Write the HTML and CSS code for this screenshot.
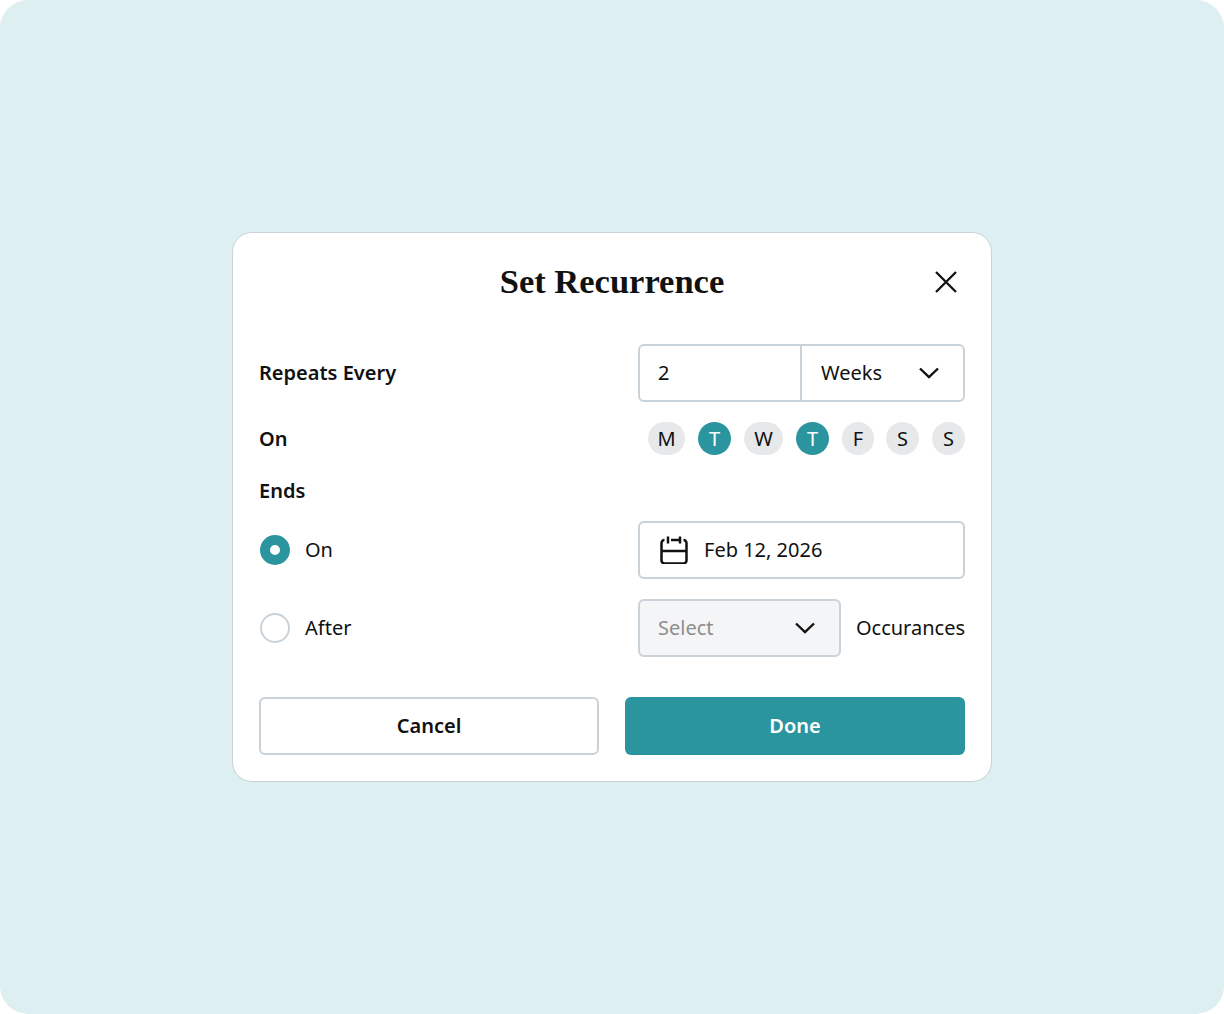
FILE: index.html
```html
<!DOCTYPE html>
<html lang="en">
<head>
  <meta charset="UTF-8">
  <meta name="viewport" content="width=device-width, initial-scale=1.0">
  <title>Set Recurrence</title>
  <link rel="stylesheet" href="styles.css">
</head>
<body>
  <div class="frame">
    <div class="dialog">
      <div class="dialog-head">
        <h1 class="dialog-title">Set Recurrence</h1>
        <svg class="close-icon" width="24" height="24" viewBox="0 0 24 24" fill="none" stroke="#111" stroke-width="2.3">
          <path d="M2 2 22 22M22 2 2 22"/>
        </svg>
      </div>

      <div class="row row-repeat">
        <div class="label">Repeats Every</div>
        <div class="field field-split">
          <div class="split-num">2</div>
          <div class="split-unit">
            <span>Weeks</span>
            <svg class="chevron" width="20" height="12" viewBox="0 0 20 12" fill="none" stroke="#111" stroke-width="2.4">
              <path d="M1 1.5 10 10.2 19 1.5"/>
            </svg>
          </div>
        </div>
      </div>

      <div class="row row-days">
        <div class="label">On</div>
        <div class="days">
          <span class="day day-m">M</span>
          <span class="day day-on">T</span>
          <span class="day day-w">W</span>
          <span class="day day-on">T</span>
          <span class="day day-f">F</span>
          <span class="day">S</span>
          <span class="day">S</span>
        </div>
      </div>

      <div class="label label-ends">Ends</div>

      <div class="row row-date">
        <label class="radio-line"><span class="radio radio-on"></span>On</label>
        <div class="field field-date">
          <svg class="cal-icon" width="28" height="28" viewBox="0 0 28 28" fill="none" stroke="#111" stroke-width="2.5">
            <path d="M4.5 4A3 3 0 0 0 1.5 7V24.5A3 3 0 0 0 4.5 27.5H23.5A3 3 0 0 0 26.5 24.5V7A3 3 0 0 0 23.5 4M11 4H19M1.5 15H26.5M8 0.5V7.5M20 0.5V7.5"/>
          </svg>
          <span>Feb 12, 2026</span>
        </div>
      </div>

      <div class="row row-after">
        <label class="radio-line"><span class="radio"></span>After</label>
        <div class="after-right">
          <div class="field field-select">
            <span>Select</span>
            <svg class="chevron" width="20" height="12" viewBox="0 0 20 12" fill="none" stroke="#111" stroke-width="2.4">
              <path d="M1 1.5 10 10.2 19 1.5"/>
            </svg>
          </div>
          <span>Occurances</span>
        </div>
      </div>

      <div class="actions">
        <button class="btn btn-cancel">Cancel</button>
        <button class="btn btn-done">Done</button>
      </div>
    </div>
  </div>
</body>
</html>
```

FILE: styles.css
```css
* {
  padding: 0;
  margin: 0;
  box-sizing: border-box;
}
body {
  background-color: #fff;
  font-family: "Noto Sans", sans-serif;
  font-size: 20px;
  line-height: 28px;
  color: #111;
}
.frame {
  width: 1224px;
  height: 1014px;
  display: flex;
  align-items: center;
  justify-content: center;
  background-color: #ddeff1;
  border-radius: 28px;
}
.dialog {
  width: 760px;
  height: 550px;
  padding: 0 26px;
  background-color: #fff;
  border: 1px solid #c9d2d8;
  border-radius: 20px;
  display: flex;
  flex-direction: column;
}
.dialog-head {
  height: 111px;
  padding-bottom: 16px;
  display: flex;
  align-items: center;
  justify-content: center;
  position: relative;
}
.dialog-title {
  font-family: "Liberation Serif", serif;
  font-size: 34.5px;
  line-height: 40px;
  font-weight: 700;
}
.close-icon {
  position: absolute;
  right: 7px;
  top: 37px;
}
.row {
  display: flex;
  align-items: center;
  justify-content: space-between;
}
.label {
  font-weight: 600;
}
.row-days {
  margin-top: 20px;
}
.label-ends {
  margin-top: 22px;
}
.row-date {
  margin-top: 16px;
}
.row-after {
  margin-top: 20px;
}
.field {
  height: 58px;
  border: 2px solid #c9d2d8;
  border-radius: 6px;
  display: flex;
  align-items: center;
}
.field-split {
  width: 327px;
}
.split-num {
  width: 162px;
  height: 100%;
  padding-left: 18px;
  line-height: 54px;
  border-right: 2px solid #c9d2d8;
}
.split-unit {
  flex: 1;
  padding: 0 24px 0 19px;
  display: flex;
  align-items: center;
  justify-content: space-between;
}
.days {
  display: flex;
  gap: 13px;
}
.day {
  width: 33px;
  height: 33px;
  border-radius: 17px;
  background-color: #e7e8ea;
  display: flex;
  align-items: center;
  justify-content: center;
}
.day-m {
  width: 37px;
}
.day-w {
  width: 39px;
}
.day-f {
  width: 32px;
  margin-right: -1px;
}
.day-on {
  background-color: #2b959f;
  color: #fff;
}
.radio-line {
  display: flex;
  align-items: center;
  gap: 15px;
}
.radio {
  width: 30px;
  height: 30px;
  margin-left: 1px;
  border: 2px solid #c9d2d8;
  border-radius: 50%;
}
.radio-on {
  border: 10px solid #2b959f;
  background-color: #fff;
}
.field-date {
  width: 327px;
  padding-left: 20px;
  gap: 16px;
}
.after-right {
  width: 327px;
  display: flex;
  align-items: center;
  justify-content: space-between;
}
.field-select {
  width: 203px;
  padding: 0 24px 0 18px;
  justify-content: space-between;
  background-color: #f4f5f7;
  color: #8d8d8d;
}
.actions {
  margin-top: 40px;
  display: grid;
  grid-template-columns: 1fr 1fr;
  gap: 26px;
}
.btn {
  height: 58px;
  padding-bottom: 2px;
  border-radius: 6px;
  font-family: inherit;
  font-size: 20px;
  font-weight: 600;
}
.btn-cancel {
  background-color: #fff;
  border: 2px solid #c9d2d8;
  color: #111;
}
.btn-done {
  background-color: #2b959f;
  border: none;
  color: #fff;
}
```
